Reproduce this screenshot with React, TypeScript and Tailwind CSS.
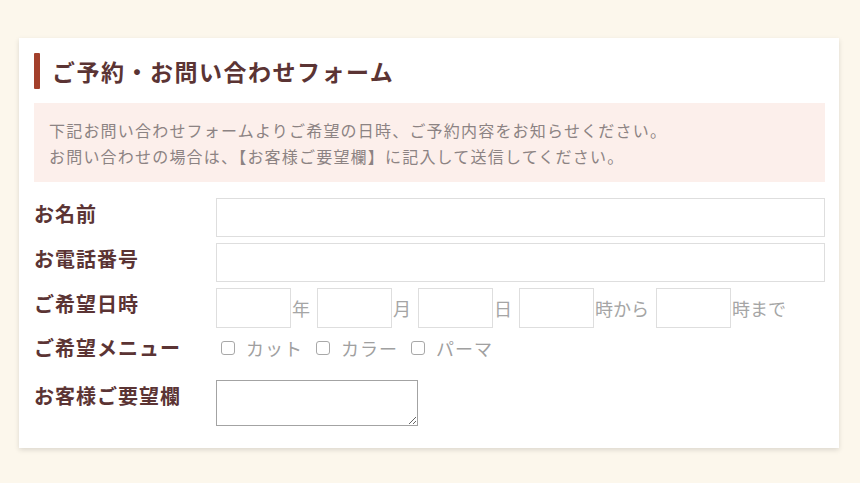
import React from 'react'

const font = { fontFamily: '"Noto Sans CJK JP", "Noto Sans", sans-serif' }

const Label = ({ children }: { children: React.ReactNode }) => (
  <div className="text-[20px] font-bold leading-[28px] text-[#5b3434] tracking-[1px] pt-[2px]">{children}</div>
)

const Box = () => (
  <input type="text" className="w-[75px] h-[40px] border border-[#dedede] bg-white outline-none" />
)

const Unit = ({ children }: { children: React.ReactNode }) => (
  <span className="ml-[1px] mr-[7px] text-[18px] text-[#a5a5a5]">{children}</span>
)

const Check = ({ label }: { label: string }) => (
  <label className="flex items-center mr-[13px]">
    <span className="w-[14px] h-[14px] border border-[#a8a8a8] rounded-[3px] bg-white" />
    <span className="ml-[11px] text-[18px] text-[#a0a0a0] tracking-[1px]">{label}</span>
  </label>
)

const App = () => {
  return (
    <div className="w-[860px] h-[483px] bg-[#fcf7ec] pt-[38px] pl-[19px]" style={font}>
      <div className="w-[820px] bg-white shadow-[0_2px_5px_rgba(0,0,0,0.13)] pt-[15px] pl-[15px] pr-[14px] pb-[22px]">
        <div className="flex items-center">
          <span className="w-[6px] h-[36px] bg-[#a3402b] rounded-[1px]" />
          <h2 className="ml-[12px] text-[23px] font-bold text-[#5b3434] leading-[36px] tracking-[1.5px]">ご予約・お問い合わせフォーム</h2>
        </div>

        <div className="mt-[14px] bg-[#fcefeb] pl-[15px] pt-[14px] pb-[13px] text-[16px] leading-[26px] tracking-[1.2px] text-[#8c8383]">
          <p>下記お問い合わせフォームよりご希望の日時、ご予約内容をお知らせください。</p>
          <p>お問い合わせの場合は、【お客様ご要望欄】に記入して送信してください。</p>
        </div>

        <div className="mt-[16px] grid grid-cols-[182px_1fr] gap-y-[6px]">
          <Label>お名前</Label>
          <input type="text" className="h-[39px] border border-[#dedede] outline-none" />

          <Label>お電話番号</Label>
          <input type="text" className="h-[39px] border border-[#dedede] outline-none" />

          <Label>ご希望日時</Label>
          <div className="flex items-center">
            <Box /><Unit>年</Unit>
            <Box /><Unit>月</Unit>
            <Box /><Unit>日</Unit>
            <Box /><Unit>時から</Unit>
            <Box /><Unit>時まで</Unit>
          </div>

          <div className="flex items-center h-[28px] text-[20px] font-bold text-[#5b3434] tracking-[1px]">ご希望メニュー</div>
          <div className="flex items-center h-[28px] pl-[5px]">
            <Check label="カット" />
            <Check label="カラー" />
            <Check label="パーマ" />
          </div>

          <div className="mt-[12px]"><Label>お客様ご要望欄</Label></div>
          <div className="mt-[12px]">
            <textarea className="block w-[202px] h-[46px] border border-[#a3a3a3] outline-none" />
          </div>
        </div>
      </div>
    </div>
  )
}

export default App
